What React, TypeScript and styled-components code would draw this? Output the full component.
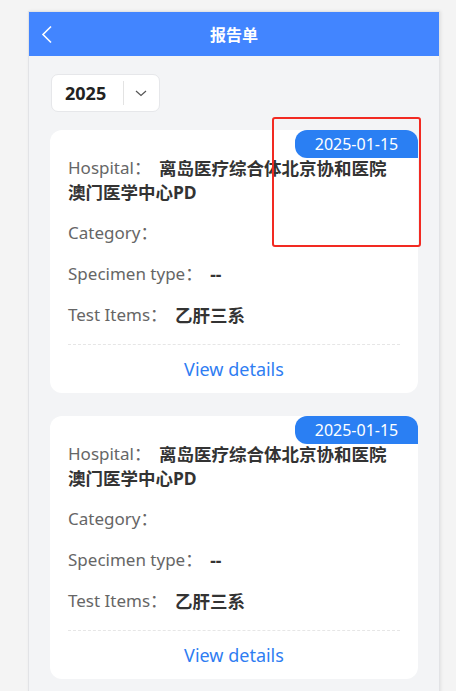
import React from 'react'
import styled, { createGlobalStyle } from 'styled-components'

const GlobalStyle = createGlobalStyle`
    html, body {
        margin: 0;
        padding: 0;
        background: #f4f4f4;
        font-family: "Noto Sans", "Noto Sans CJK SC", sans-serif;
    }
    * {
        box-sizing: border-box;
    }
`

const Page = styled.div`
    position: relative;
    padding: 11px 0 0 28px;
`
const Frame = styled.div`
    width: 412px;
    border: 1px solid #e2e3e6;
    box-shadow: 1px 0 3px rgba(0, 0, 0, .08);
    background: #f3f4f6;
`
const Header = styled.div`
    display: grid;
    grid-template-columns: 44px 1fr 44px;
    align-items: center;
    height: 44px;
    background: #4285ff;
    color: #fff;
`
const BackButton = styled.div`
    display: flex;
    align-items: center;
    padding-left: 12px;
    height: 100%;
`
const Title = styled.div`
    text-align: center;
    font-size: 16px;
    font-weight: 700;
`
const Body = styled.div`
    display: flex;
    flex-direction: column;
    gap: 23px;
    padding: 18px 21px 40px;
`
const YearSelect = styled.div`
    display: flex;
    align-items: center;
    align-self: flex-start;
    width: 109px;
    height: 38px;
    margin: 0 0 -5px 1px;
    padding-left: 13px;
    background: #fff;
    border: 1px solid #e6e7ea;
    border-radius: 7px;
`
const YearText = styled.span`
    font-size: 18px;
    font-weight: 700;
    color: #222;
`
const Separator = styled.span`
    width: 1px;
    height: 24px;
    margin: 0 11px 0 17px;
    background: #e3e3e3;
`
const Card = styled.div`
    position: relative;
    background: #fff;
    border-radius: 12px;
    padding: 26px 18px 0;
`
const DateBadge = styled.div`
    position: absolute;
    top: 0;
    right: 0;
    width: 123px;
    height: 28px;
    line-height: 28px;
    text-align: center;
    font-size: 16px;
    color: #fff;
    background: #2a7ff3;
    border-radius: 12px 12px 0 12px;
`
const Row = styled.div`
    font-size: 17px;
    line-height: 24px;
    margin-bottom: 17px;
`
const Label = styled.span`
    color: #666;
    vertical-align: top;
`
const Value = styled.span`
    margin-left: 8px;
    color: #333;
    font-size: 17.5px;
    font-weight: 700;
    vertical-align: top;
`
const Divider = styled.div`
    border-top: 1px dashed #e6e6e6;
`
const DetailsLink = styled.div`
    height: 48px;
    line-height: 48px;
    text-align: center;
    font-size: 18px;
    color: #2f7df2;
`
const Annotation = styled.div`
    position: absolute;
    left: 272px;
    top: 117px;
    width: 149px;
    height: 130px;
    border: 2px solid #f22a22;
    border-radius: 3px;
    pointer-events: none;
`

type Report = {
    id: number
    date: string
    hospital: string
    category: string
    specimen: string
    items: string
}

const reports: Report[] = [
    { id: 1, date: '2025-01-15', hospital: '离岛医疗综合体北京协和医院澳门医学中心PD', category: '', specimen: '--', items: '乙肝三系' },
    { id: 2, date: '2025-01-15', hospital: '离岛医疗综合体北京协和医院澳门医学中心PD', category: '', specimen: '--', items: '乙肝三系' },
]

const ReportCard = ({ report }: { report: Report }) => (
    <Card>
        <DateBadge>{report.date}</DateBadge>
        <Row><Label>{'Hospital：'}</Label><Value>{report.hospital}</Value></Row>
        <Row><Label>{'Category：'}</Label><Value>{report.category}</Value></Row>
        <Row><Label>{'Specimen type：'}</Label><Value>{report.specimen}</Value></Row>
        <Row><Label>{'Test Items：'}</Label><Value>{report.items}</Value></Row>
        <Divider />
        <DetailsLink>{'View details'}</DetailsLink>
    </Card>
)

const App = () => (
    <Page>
        <GlobalStyle />
        <Frame>
            <Header>
                <BackButton>
                    <svg width="12" height="19" viewBox="0 0 12 19">
                        <path d="M10 1.5 L2 9.5 L10 17.5" fill="none" stroke="#fff" strokeWidth="1.6" />
                    </svg>
                </BackButton>
                <Title>{'报告单'}</Title>
                <span />
            </Header>
            <Body>
                <YearSelect>
                    <YearText>{'2025'}</YearText>
                    <Separator />
                    <svg width="12" height="7" viewBox="0 0 12 7">
                        <path d="M1 1 L6 5.5 L11 1" fill="none" stroke="#555" strokeWidth="1.2" />
                    </svg>
                </YearSelect>
                {reports.map(r => <ReportCard key={r.id} report={r} />)}
            </Body>
        </Frame>
        <Annotation />
    </Page>
)

export default App
